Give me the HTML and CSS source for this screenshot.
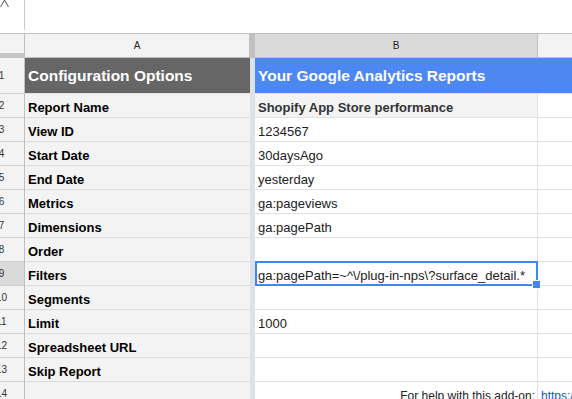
FILE: index.html
```html
<!DOCTYPE html>
<html lang="en">
  <head>
    <meta charset="utf-8" />
    <title>Google Analytics Reports - configuration</title>
    <link rel="stylesheet" href="styles.css">
  </head>
  <body>
    <div id="sheet">
      <div class="formula_bar">
        <div class="fx_cell">
          <svg width="10" height="8" viewBox="0 0 10 8">
            <path d="M4.5 0 L0.5 7 M4.5 0 L8.5 7" stroke="#777" stroke-width="1.2" fill="none" />
          </svg>
        </div>
        <div class="fx_input"></div>
      </div>

      <div class="grid">
        <!-- column headers -->
        <div class="corner"></div>
        <div class="col_head">A</div>
        <div class="freeze head"></div>
        <div class="col_head selected">B</div>
        <div class="col_head last"></div>

        <!-- 1 -->
        <div class="rh"><span>1</span></div>
        <div class="cell title_a">Configuration Options</div>
        <div class="freeze"></div>
        <div class="cell title_b">Your Google Analytics Reports</div>
        <div class="cell title_c"></div>

        <!-- 2 -->
        <div class="rh"><span>2</span></div>
        <div class="cell label">Report Name</div>
        <div class="freeze"></div>
        <div class="cell value name">Shopify App Store performance</div>
        <div class="cell extra"></div>

        <div class="rh"><span>3</span></div>
        <div class="cell label">View ID</div>
        <div class="freeze"></div>
        <div class="cell value">1234567</div>
        <div class="cell extra"></div>

        <div class="rh"><span>4</span></div>
        <div class="cell label">Start Date</div>
        <div class="freeze"></div>
        <div class="cell value">30daysAgo</div>
        <div class="cell extra"></div>

        <div class="rh"><span>5</span></div>
        <div class="cell label">End Date</div>
        <div class="freeze"></div>
        <div class="cell value">yesterday</div>
        <div class="cell extra"></div>

        <div class="rh"><span>6</span></div>
        <div class="cell label">Metrics</div>
        <div class="freeze"></div>
        <div class="cell value">ga:pageviews</div>
        <div class="cell extra"></div>

        <div class="rh"><span>7</span></div>
        <div class="cell label">Dimensions</div>
        <div class="freeze"></div>
        <div class="cell value">ga:pagePath</div>
        <div class="cell extra"></div>

        <div class="rh"><span>8</span></div>
        <div class="cell label">Order</div>
        <div class="freeze"></div>
        <div class="cell value"></div>
        <div class="cell extra"></div>

        <div class="rh active"><span>9</span></div>
        <div class="cell label">Filters</div>
        <div class="freeze"></div>
        <div class="cell value current">ga:pagePath=~^\/plug-in-nps\?surface_detail.*</div>
        <div class="cell extra"></div>

        <div class="rh"><span>10</span></div>
        <div class="cell label">Segments</div>
        <div class="freeze"></div>
        <div class="cell value"></div>
        <div class="cell extra"></div>

        <div class="rh"><span>11</span></div>
        <div class="cell label">Limit</div>
        <div class="freeze"></div>
        <div class="cell value">1000</div>
        <div class="cell extra"></div>

        <div class="rh"><span>12</span></div>
        <div class="cell label">Spreadsheet URL</div>
        <div class="freeze"></div>
        <div class="cell value"></div>
        <div class="cell extra"></div>

        <div class="rh"><span>13</span></div>
        <div class="cell label">Skip Report</div>
        <div class="freeze"></div>
        <div class="cell value"></div>
        <div class="cell extra"></div>

        <div class="rh"><span>14</span></div>
        <div class="cell label"></div>
        <div class="freeze"></div>
        <div class="cell value help">For help with this add-on:</div>
        <div class="cell extra help_link"><a href="#">https://github.com/shopify/google-analytics-reports</a></div>
      </div>
    </div>
  </body>
</html>
```

FILE: styles.css
```css
* {
  margin: 0;
  padding: 0;
  box-sizing: border-box;
}
html,
body {
  width: 572px;
  height: 399px;
  overflow: hidden;
  background: #fff;
}
body {
  font-family: "Liberation Sans", Arial, sans-serif;
  font-size: 13px;
  color: #222;
}

/* formula bar (cut off at the top) */
.formula_bar {
  display: flex;
  height: 33px;
}
.fx_cell {
  width: 25px;
  height: 30px;
  border-right: 1px solid #cacaca;
  display: flex;
  align-items: flex-start;
}
.fx_input {
  flex: 1;
}

/* the sheet itself */
.grid {
  display: grid;
  grid-template-columns: 25px 225px 5px 283px 1fr;
  grid-template-rows: 24px 36px repeat(13, 24px);
  border-top: 1px solid #c0c0c0;
}
.corner {
  background: #f3f3f3;
  border-right: 1px solid #c0c0c0;
  border-bottom: 5px solid #c4c4c4;
}
.col_head {
  display: flex;
  align-items: center;
  justify-content: center;
  font-size: 10px;
  color: #222;
  background: #f3f3f3;
  border-bottom: 1px solid #c0c0c0;
  border-right: 1px solid #c0c0c0;
}
.col_head.selected {
  background: #dadada;
}
.col_head.last {
  border-right: 0;
}
.freeze {
  background: #dde1ea;
}
.freeze.head {
  background: #c0c0c0;
}

/* row numbers, the column is cropped so numbers are cut in half */
.rh {
  display: flex;
  align-items: center;
  justify-content: flex-end;
  overflow: hidden;
  font-size: 10px;
  color: #333;
  background: #f3f3f3;
  border-right: 1px solid #c0c0c0;
  border-bottom: 1px solid #cfcfcf;
}
.rh span {
  flex-shrink: 0;
  width: 45px;
  text-align: center;
}
.rh.active {
  background: #dadada;
}

.cell {
  display: flex;
  align-items: flex-end;
  padding: 0 3px 2px;
  white-space: nowrap;
  border-bottom: 1px solid #e2e2e2;
}
.title_a,
.title_b,
.title_c {
  align-items: center;
  padding-bottom: 0;
  font-size: 15.5px;
  font-weight: bold;
  color: #fff;
}
.title_a {
  background: #666;
}
.title_b,
.title_c {
  background: #4c87f2;
}
.label {
  font-weight: bold;
  color: #000;
  background: #f3f3f3;
  border-bottom-color: #dadada;
}
.value {
  border-right: 1px solid #e2e2e2;
}
.value.name {
  font-weight: bold;
  color: #333;
  background: #f3f3f3;
}
.value.help {
  justify-content: flex-end;
  padding-right: 2px;
  font-size: 12px;
}
.help_link {
  font-size: 12px;
}
.extra a {
  color: #1155cc;
  text-decoration: none;
}

/* selected cell B9 */
.current {
  position: relative;
}
.current::after {
  content: "";
  position: absolute;
  top: -1px;
  left: 0;
  right: -1px;
  bottom: -1px;
  border: 2px solid #4285f4;
}
.current::before {
  content: "";
  position: absolute;
  right: -4px;
  bottom: -4px;
  width: 7px;
  height: 7px;
  background: #4285f4;
  border: 1px solid #fff;
  z-index: 1;
}
```
